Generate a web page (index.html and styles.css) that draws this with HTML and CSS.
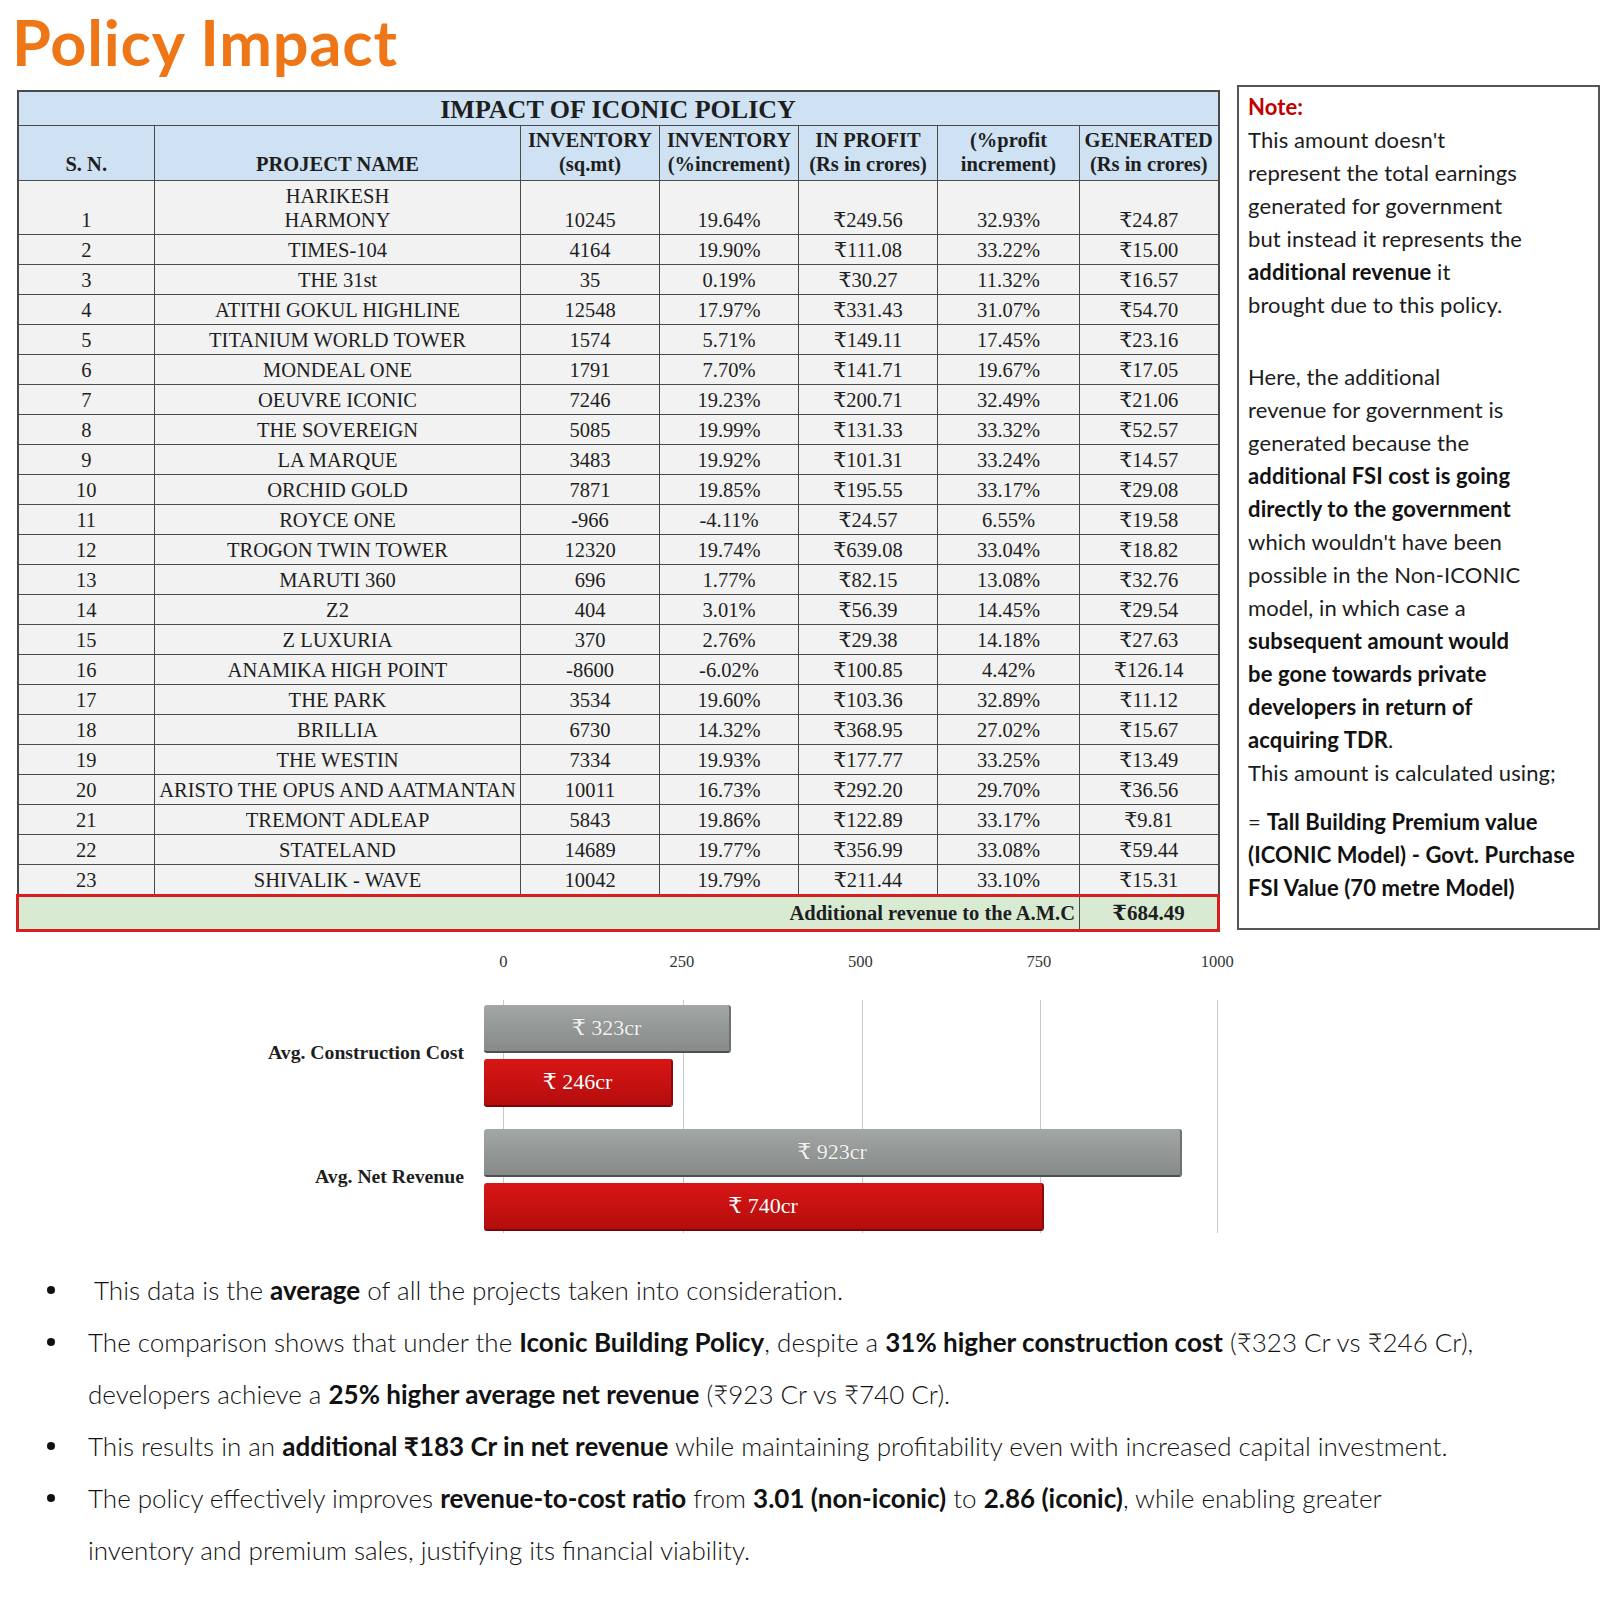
FILE: index.html
```html
<!DOCTYPE html>
<html lang="en">
<head>
<meta charset="utf-8">
<title>Policy Impact</title>
<link rel="stylesheet" href="styles.css">
</head>
<body>
<h1 class="title">Policy Impact</h1>

<div class="top">
  <table class="impact">
    <colgroup>
      <col class="c-sn"><col class="c-name"><col class="c-a"><col class="c-a"><col class="c-a"><col class="c-b"><col class="c-a">
    </colgroup>
    <thead>
      <tr class="caption-row"><th colspan="7">IMPACT OF ICONIC POLICY</th></tr>
      <tr class="head-row">
        <th>S. N.</th>
        <th>PROJECT NAME</th>
        <th>INVENTORY<br>(sq.mt)</th>
        <th>INVENTORY<br>(%increment)</th>
        <th>IN PROFIT<br>(Rs in crores)</th>
        <th>(%profit<br>increment)</th>
        <th>GENERATED<br>(Rs in crores)</th>
      </tr>
    </thead>
    <tbody>
      <tr><td>1</td><td>HARIKESH<br>HARMONY</td><td>10245</td><td>19.64%</td><td>₹249.56</td><td>32.93%</td><td>₹24.87</td></tr>
      <tr><td>2</td><td>TIMES-104</td><td>4164</td><td>19.90%</td><td>₹111.08</td><td>33.22%</td><td>₹15.00</td></tr>
      <tr><td>3</td><td>THE 31st</td><td>35</td><td>0.19%</td><td>₹30.27</td><td>11.32%</td><td>₹16.57</td></tr>
      <tr><td>4</td><td>ATITHI GOKUL HIGHLINE</td><td>12548</td><td>17.97%</td><td>₹331.43</td><td>31.07%</td><td>₹54.70</td></tr>
      <tr><td>5</td><td>TITANIUM WORLD TOWER</td><td>1574</td><td>5.71%</td><td>₹149.11</td><td>17.45%</td><td>₹23.16</td></tr>
      <tr><td>6</td><td>MONDEAL ONE</td><td>1791</td><td>7.70%</td><td>₹141.71</td><td>19.67%</td><td>₹17.05</td></tr>
      <tr><td>7</td><td>OEUVRE ICONIC</td><td>7246</td><td>19.23%</td><td>₹200.71</td><td>32.49%</td><td>₹21.06</td></tr>
      <tr><td>8</td><td>THE SOVEREIGN</td><td>5085</td><td>19.99%</td><td>₹131.33</td><td>33.32%</td><td>₹52.57</td></tr>
      <tr><td>9</td><td>LA MARQUE</td><td>3483</td><td>19.92%</td><td>₹101.31</td><td>33.24%</td><td>₹14.57</td></tr>
      <tr><td>10</td><td>ORCHID GOLD</td><td>7871</td><td>19.85%</td><td>₹195.55</td><td>33.17%</td><td>₹29.08</td></tr>
      <tr><td>11</td><td>ROYCE ONE</td><td>-966</td><td>-4.11%</td><td>₹24.57</td><td>6.55%</td><td>₹19.58</td></tr>
      <tr><td>12</td><td>TROGON TWIN TOWER</td><td>12320</td><td>19.74%</td><td>₹639.08</td><td>33.04%</td><td>₹18.82</td></tr>
      <tr><td>13</td><td>MARUTI 360</td><td>696</td><td>1.77%</td><td>₹82.15</td><td>13.08%</td><td>₹32.76</td></tr>
      <tr><td>14</td><td>Z2</td><td>404</td><td>3.01%</td><td>₹56.39</td><td>14.45%</td><td>₹29.54</td></tr>
      <tr><td>15</td><td>Z LUXURIA</td><td>370</td><td>2.76%</td><td>₹29.38</td><td>14.18%</td><td>₹27.63</td></tr>
      <tr><td>16</td><td>ANAMIKA HIGH POINT</td><td>-8600</td><td>-6.02%</td><td>₹100.85</td><td>4.42%</td><td>₹126.14</td></tr>
      <tr><td>17</td><td>THE PARK</td><td>3534</td><td>19.60%</td><td>₹103.36</td><td>32.89%</td><td>₹11.12</td></tr>
      <tr><td>18</td><td>BRILLIA</td><td>6730</td><td>14.32%</td><td>₹368.95</td><td>27.02%</td><td>₹15.67</td></tr>
      <tr><td>19</td><td>THE WESTIN</td><td>7334</td><td>19.93%</td><td>₹177.77</td><td>33.25%</td><td>₹13.49</td></tr>
      <tr><td>20</td><td>ARISTO THE OPUS AND AATMANTAN</td><td>10011</td><td>16.73%</td><td>₹292.20</td><td>29.70%</td><td>₹36.56</td></tr>
      <tr><td>21</td><td>TREMONT ADLEAP</td><td>5843</td><td>19.86%</td><td>₹122.89</td><td>33.17%</td><td>₹9.81</td></tr>
      <tr><td>22</td><td>STATELAND</td><td>14689</td><td>19.77%</td><td>₹356.99</td><td>33.08%</td><td>₹59.44</td></tr>
      <tr><td>23</td><td>SHIVALIK - WAVE</td><td>10042</td><td>19.79%</td><td>₹211.44</td><td>33.10%</td><td>₹15.31</td></tr>
    </tbody>
    <tfoot>
      <tr class="total-row"><td colspan="6" class="total-label">Additional revenue to the A.M.C</td><td class="total-value">₹684.49</td></tr>
    </tfoot>
  </table>

  <aside class="note">
    <p class="note-p first"><b class="note-title">Note:</b><br>This amount doesn't<br>represent the total earnings<br>generated for government<br>but instead it represents the<br><b>additional revenue</b> it<br>brought due to this policy.</p>
    <p class="note-p second">Here, the additional<br>revenue for government is<br>generated because the<br><b>additional FSI cost is going<br>directly to the government</b><br>which wouldn't have been<br>possible in the Non-ICONIC<br>model, in which case a<br><b>subsequent amount would<br>be gone towards private<br>developers in return of<br>acquiring TDR</b>.<br>This amount is calculated using;</p>
    <p class="note-p third">= <b>Tall Building Premium value<br>(ICONIC Model) - Govt. Purchase<br>FSI Value (70 metre Model)</b></p>
  </aside>
</div>

<section class="chart">
  <div class="axis"><span>0</span><span>250</span><span>500</span><span>750</span><span>1000</span></div>
  <div class="chart-body">
    <div class="cats">
      <div class="cat">Avg. Construction Cost</div>
      <div class="cat">Avg. Net Revenue</div>
    </div>
    <div class="plot">
      <div class="grid">
        <i style="left:19px"></i><i style="left:199px"></i><i style="left:378px"></i><i style="left:556px"></i><i style="left:733px"></i>
      </div>
      <div class="group">
        <div class="bar gray" style="width:247px">₹ 323cr</div>
        <div class="bar red" style="width:189px">₹ 246cr</div>
      </div>
      <div class="group">
        <div class="bar gray" style="width:698px">₹ 923cr</div>
        <div class="bar red" style="width:560px">₹ 740cr</div>
      </div>
    </div>
  </div>
</section>

<ul class="points">
  <li><span class="pt first-pt">This data is the <b>average</b> of all the projects taken into consideration.</span></li>
  <li><span class="pt">The comparison shows that under the <b>Iconic Building Policy</b>, despite a <b>31% higher construction cost</b> (₹323 Cr vs ₹246 Cr),<br>developers achieve a <b>25% higher average net revenue</b> (₹923 Cr vs ₹740 Cr).</span></li>
  <li><span class="pt">This results in an <b>additional ₹183 Cr in net revenue</b> while maintaining profitability even with increased capital investment.</span></li>
  <li><span class="pt">The policy effectively improves <b>revenue-to-cost ratio</b> from <b>3.01 (non-iconic)</b> to <b>2.86 (iconic)</b>, while enabling greater<br>inventory and premium sales, justifying its financial viability.</span></li>
</ul>
</body>
</html>
```

FILE: styles.css
```css
html, body {
  margin: 0;
  padding: 0;
  background: #ffffff;
}

body {
  width: 1600px;
  font-family: "Liberation Serif", "DejaVu Serif", serif;
  color: #1a1a1a;
}

.title {
  margin: 0;
  padding: 10px 0 0 12px;
  font-family: Lato, "Noto Sans", sans-serif;
  font-weight: 700;
  font-size: 63px;
  line-height: 63px;
  color: #ee7616;
  letter-spacing: 0.8px;
}

/* ---------- top section ---------- */
.top {
  display: flex;
  align-items: flex-start;
  margin-top: 12px;
}

.impact {
  margin: 5px 0 0 16px;
  width: 1201px;
  table-layout: fixed;
  border-collapse: collapse;
  border: 2px solid #4a4a4a;
  font-family: "Liberation Serif", "DejaVu Serif", serif;
  color: #1e1e1e;
}

.c-sn { width: 137px; }
.c-name { width: 366px; }
.c-a { width: 139px; }
.c-b { width: 142px; }

.impact th,
.impact td {
  border: 1px solid #4a4a4a;
  text-align: center;
  vertical-align: bottom;
  white-space: nowrap;
  overflow: hidden;
}

.caption-row th {
  background: #cfe2f3;
  font-size: 26px;
  font-weight: 700;
  line-height: 30px;
  padding: 3px 0 0;
}

.head-row th {
  background: #cfe2f3;
  font-size: 20.5px;
  font-weight: 700;
  line-height: 24px;
  padding: 2px 0 4px;
}

.impact tbody td {
  background: #f2f2f2;
  font-size: 20.5px;
  line-height: 24px;
  padding: 3px 0 2px;
}

.total-row td {
  background: #d9ead3;
  font-weight: 700;
  font-size: 20.5px;
  line-height: 26px;
  padding: 3px 4px 3px;
  border-top: 3px solid #d61f1f;
  border-bottom: 3px solid #d61f1f;
}

.total-label {
  text-align: right !important;
  border-left: 3px solid #d61f1f !important;
}

.total-value {
  border-right: 3px solid #d61f1f !important;
  font-size: 21px !important;
}

/* ---------- note ---------- */
.note {
  box-sizing: border-box;
  margin-left: 17px;
  width: 366px;
  height: 845px;
  border: 2px solid #555555;
  padding: 3px 0 0 9px;
  font-family: Lato, "Noto Sans", sans-serif;
  font-size: 22px;
  line-height: 33px;
  letter-spacing: 0.1px;
  color: #1c1c1c;
  white-space: nowrap;
}

.note-p {
  margin: 0;
}

.note-p.first {
  margin-bottom: 39px;
}

.note-p.second {
  margin-bottom: 16px;
}

.note b {
  font-weight: 700;
  color: #111111;
}

.note .note-title {
  color: #c00000;
}

/* ---------- chart ---------- */
.chart {
  margin-top: 20px;
}

.axis {
  display: flex;
  padding-left: 414px;
  height: 20px;
  font-size: 16.5px;
  line-height: 20px;
  color: #333333;
}

.axis span {
  width: 178.5px;
  text-align: center;
}

.chart-body {
  display: flex;
  margin-top: 28px;
}

.cats {
  width: 464px;
  display: flex;
  flex-direction: column;
  gap: 22px;
  padding-top: 1px;
  margin-right: 20px;
}

.cat {
  height: 102px;
  display: flex;
  align-items: center;
  justify-content: flex-end;
  font-weight: 700;
  font-size: 19.7px;
  color: #1e1e1e;
}

.plot {
  position: relative;
  width: 760px;
  padding: 5px 0 2px;
  display: flex;
  flex-direction: column;
  gap: 22px;
}

.grid {
  position: absolute;
  top: 0;
  bottom: 0;
  left: 0;
  right: 0;
}

.grid i {
  position: absolute;
  top: 0;
  bottom: 0;
  width: 1px;
  background: #c9c9c9;
}

.group {
  position: relative;
  display: flex;
  flex-direction: column;
  gap: 6px;
}

.bar {
  box-sizing: border-box;
  height: 48px;
  border-radius: 3px;
  display: flex;
  align-items: center;
  justify-content: center;
  font-size: 22px;
  color: #f3f3f3;
  text-shadow: 0 0 1px rgba(0, 0, 0, 0.25);
}

.bar.gray {
  background: linear-gradient(#a3a7a5 0%, #959997 45%, #868a88 100%);
  border-bottom: 2px solid #4c504e;
  border-right: 2px solid #6d716f;
}

.bar.red {
  background: linear-gradient(#d81616 0%, #c81111 50%, #b30d0d 100%);
  border-bottom: 2px solid #7a0707;
  border-right: 2px solid #8e0a0a;
  color: #ffffff;
}

/* ---------- bullet points ---------- */
.points {
  list-style: none;
  margin: 31px 0 0;
  padding: 0;
  font-family: Lato, "Noto Sans", sans-serif;
  font-weight: 300;
  font-size: 26px;
  line-height: 52px;
  color: #111111;
}

.points li {
  display: flex;
  align-items: flex-start;
}

.points li::before {
  content: "";
  flex-shrink: 0;
  width: 8px;
  height: 8px;
  border-radius: 50%;
  background: #111111;
  margin: 22px 33px 0 47px;
}

.pt {
  white-space: nowrap;
}

.first-pt {
  padding-left: 6px;
}

.points b {
  font-weight: 700;
}
```
